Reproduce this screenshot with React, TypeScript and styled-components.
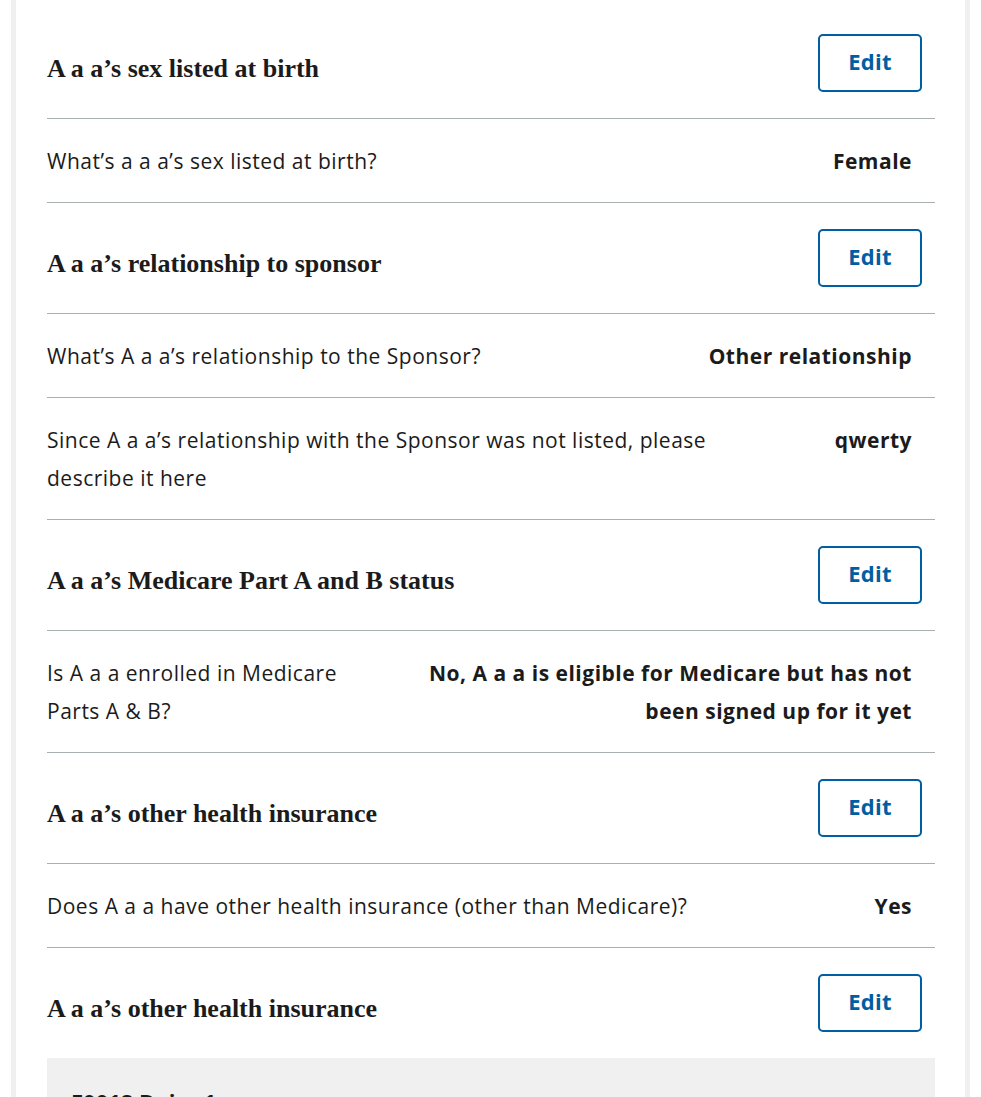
import React from 'react';
import styled, { createGlobalStyle } from 'styled-components';

const GlobalStyle = createGlobalStyle`
  * {
    box-sizing: border-box;
  }
  body {
    margin: 0;
    background: #ffffff;
    font-family: 'Open Sans', 'Liberation Sans', sans-serif;
    color: #1b1b1b;
  }
`;

const Page = styled.div`
  padding: 0 11px;
  width: 981px;
`;

const Card = styled.section`
  width: 959px;
  border-left: 5px solid #f0f0f0;
  border-right: 5px solid #f0f0f0;
  padding: 8px 30px 0 31px;
`;

const Header = styled.div<{ $last?: boolean }>`
  display: flex;
  align-items: center;
  justify-content: space-between;
  padding: 26px 13px 26px 0;
  border-bottom: ${(p) => (p.$last ? 'none' : '1px solid #a9aeb1')};
`;

const Heading = styled.h3`
  margin: 12px 0 0;
  font-family: 'Liberation Serif', 'DejaVu Serif', serif;
  font-size: 26px;
  font-weight: 700;
  line-height: 1.2;
`;

const EditButton = styled.button`
  width: 104px;
  height: 58px;
  border: 2px solid #005ea2;
  border-radius: 5px;
  background: #ffffff;
  color: #005ea2;
  font-family: 'Open Sans', 'Liberation Sans', sans-serif;
  font-size: 22px;
  font-weight: 700;
  letter-spacing: 0.3px;
  padding: 0 0 4px;
  cursor: pointer;
`;

const Row = styled.div`
  display: flex;
  justify-content: space-between;
  gap: 24px;
  padding: 23px 0 22px;
  border-bottom: 1px solid #a9aeb1;
  font-size: 21px;
  letter-spacing: 0.5px;
  line-height: 38px;
`;

const Question = styled.div<{ $narrow?: boolean }>`
  flex: 1 1 auto;
  max-width: ${(p) => (p.$narrow ? '335px' : '700px')};
`;

const Answer = styled.div`
  flex: 0 1 auto;
  max-width: 530px;
  padding-right: 23px;
  text-align: right;
  font-weight: 700;
`;

const Grey = styled.div`
  background: #f0f0f0;
  padding: 28px 24px 40px;
`;

const GreyTitle = styled.h4`
  margin: 0;
  font-family: 'Open Sans', 'Liberation Sans', sans-serif;
  font-size: 22px;
  font-weight: 700;
  line-height: 1.4;
`;

type Item =
  | { kind: 'header'; title: string }
  | { kind: 'row'; q: string; a: string; narrow?: boolean };

const items: Item[] = [
  { kind: 'header', title: 'A a a’s sex listed at birth' },
  { kind: 'row', q: 'What’s a a a’s sex listed at birth?', a: 'Female' },
  { kind: 'header', title: 'A a a’s relationship to sponsor' },
  { kind: 'row', q: 'What’s A a a’s relationship to the Sponsor?', a: 'Other relationship' },
  {
    kind: 'row',
    q: 'Since A a a’s relationship with the Sponsor was not listed, please describe it here',
    a: 'qwerty',
  },
  { kind: 'header', title: 'A a a’s Medicare Part A and B status' },
  {
    kind: 'row',
    q: 'Is A a a enrolled in Medicare Parts A & B?',
    a: 'No, A a a is eligible for Medicare but has not been signed up for it yet',
    narrow: true,
  },
  { kind: 'header', title: 'A a a’s other health insurance' },
  { kind: 'row', q: 'Does A a a have other health insurance (other than Medicare)?', a: 'Yes' },
  { kind: 'header', title: 'A a a’s other health insurance' },
];

const App: React.FC = () => {
  return (
    <Page>
      <GlobalStyle />
      <Card>
        {items.map((item, i) =>
          item.kind === 'header' ? (
            <Header key={i} $last={i === items.length - 1}>
              <Heading>{item.title}</Heading>
              <EditButton>Edit</EditButton>
            </Header>
          ) : (
            <Row key={i}>
              <Question $narrow={item.narrow}>{item.q}</Question>
              <Answer>{item.a}</Answer>
            </Row>
          )
        )}
        <Grey>
          <GreyTitle>F0012 Dairy 1</GreyTitle>
        </Grey>
      </Card>
    </Page>
  );
};

export default App;
